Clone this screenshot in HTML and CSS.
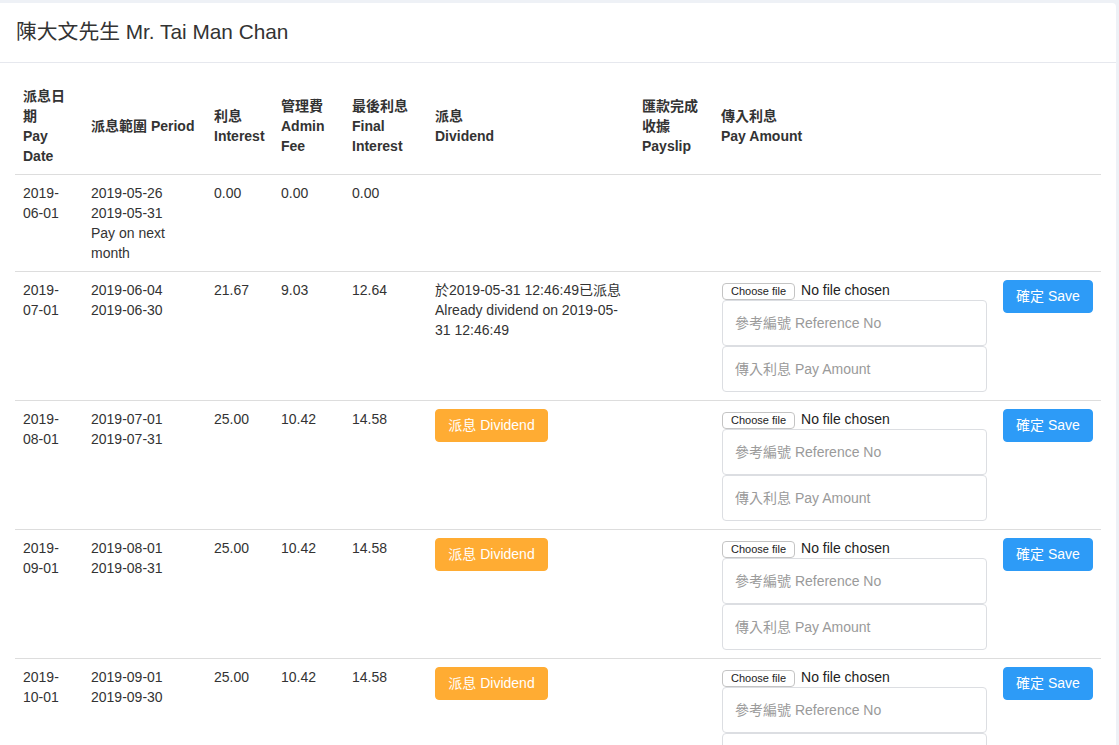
FILE: index.html
```html
<!DOCTYPE html>
<html lang="zh-Hant">
<head>
<meta charset="utf-8">
<title>派息</title>
<link rel="stylesheet" href="styles.css">
</head>
<body>
<div class="page">
  <div class="card">
    <div class="card-head">陳大文先生 Mr. Tai Man Chan</div>
    <div class="card-body">
      <table class="tbl">
        <colgroup>
          <col class="c1"><col class="c2"><col class="c3"><col class="c4"><col class="c5"><col class="c6"><col class="c7"><col class="c8"><col class="c9">
        </colgroup>
        <thead>
          <tr>
            <th>派息日期<br>Pay Date</th>
            <th>派息範圍 Period</th>
            <th>利息<br>Interest</th>
            <th>管理費<br>Admin Fee</th>
            <th>最後利息<br>Final Interest</th>
            <th>派息<br>Dividend</th>
            <th>匯款完成收據<br>Payslip</th>
            <th>傳入利息<br>Pay Amount</th>
            <th></th>
          </tr>
        </thead>
        <tbody>
          <tr>
            <td>2019-06-01</td>
            <td>2019-05-26<br>2019-05-31<br>Pay on next month</td>
            <td>0.00</td>
            <td>0.00</td>
            <td>0.00</td>
            <td></td>
            <td></td>
            <td></td>
            <td></td>
          </tr>
          <tr>
            <td>2019-07-01</td>
            <td>2019-06-04<br>2019-06-30</td>
            <td>21.67</td>
            <td>9.03</td>
            <td>12.64</td>
            <td>於2019-05-31 12:46:49已派息<br>Already dividend on 2019-05-31 12:46:49</td>
            <td></td>
            <td>
              <div class="upload">
                <label class="file"><input type="file" class="file-input"><span class="file-btn">Choose file</span><span class="file-name">No file chosen</span></label>
                <input type="text" class="field" placeholder="參考編號 Reference No">
                <input type="text" class="field" placeholder="傳入利息 Pay Amount">
              </div>
            </td>
            <td><button class="btn btn-save">確定 Save</button></td>
          </tr>
          <tr>
            <td>2019-08-01</td>
            <td>2019-07-01<br>2019-07-31</td>
            <td>25.00</td>
            <td>10.42</td>
            <td>14.58</td>
            <td><button class="btn btn-div">派息 Dividend</button></td>
            <td></td>
            <td>
              <div class="upload">
                <label class="file"><input type="file" class="file-input"><span class="file-btn">Choose file</span><span class="file-name">No file chosen</span></label>
                <input type="text" class="field" placeholder="參考編號 Reference No">
                <input type="text" class="field" placeholder="傳入利息 Pay Amount">
              </div>
            </td>
            <td><button class="btn btn-save">確定 Save</button></td>
          </tr>
          <tr>
            <td>2019-09-01</td>
            <td>2019-08-01<br>2019-08-31</td>
            <td>25.00</td>
            <td>10.42</td>
            <td>14.58</td>
            <td><button class="btn btn-div">派息 Dividend</button></td>
            <td></td>
            <td>
              <div class="upload">
                <label class="file"><input type="file" class="file-input"><span class="file-btn">Choose file</span><span class="file-name">No file chosen</span></label>
                <input type="text" class="field" placeholder="參考編號 Reference No">
                <input type="text" class="field" placeholder="傳入利息 Pay Amount">
              </div>
            </td>
            <td><button class="btn btn-save">確定 Save</button></td>
          </tr>
          <tr>
            <td>2019-10-01</td>
            <td>2019-09-01<br>2019-09-30</td>
            <td>25.00</td>
            <td>10.42</td>
            <td>14.58</td>
            <td><button class="btn btn-div">派息 Dividend</button></td>
            <td></td>
            <td>
              <div class="upload">
                <label class="file"><input type="file" class="file-input"><span class="file-btn">Choose file</span><span class="file-name">No file chosen</span></label>
                <input type="text" class="field" placeholder="參考編號 Reference No">
                <input type="text" class="field" placeholder="傳入利息 Pay Amount">
              </div>
            </td>
            <td><button class="btn btn-save">確定 Save</button></td>
          </tr>
        </tbody>
      </table>
    </div>
  </div>
</div>
</body>
</html>
```

FILE: styles.css
```css
* { box-sizing: border-box; }

html, body {
  margin: 0;
  padding: 0;
  background: #eef1f6;
}

body {
  font-family: "Liberation Sans", "Noto Sans CJK TC", sans-serif;
  font-size: 14px;
  line-height: 20px;
  color: #333;
}

.page {
  padding-top: 3px;
}

.card {
  width: 1116px;
  background: #fff;
  border-radius: 0 4px 0 0;
}

.card-head {
  height: 60px;
  display: flex;
  align-items: center;
  padding: 0 16px 2px 16px;
  font-size: 20.8px;
  color: #333;
  border-bottom: 1px solid #e6e8ee;
}

.card-body {
  padding: 15px 15px 0 15px;
}

.tbl {
  width: 1086px;
  border-collapse: collapse;
  table-layout: fixed;
}

.c1 { width: 68px; }
.c2 { width: 123px; }
.c3 { width: 67px; }
.c4 { width: 71px; }
.c5 { width: 83px; }
.c6 { width: 207px; }
.c7 { width: 79px; }
.c8 { width: 282px; }
.c9 { width: 106px; }

.tbl th {
  text-align: left;
  font-weight: bold;
  vertical-align: middle;
  padding: 8px;
  border-bottom: 1px solid #dddddd;
}

.tbl td {
  vertical-align: top;
  padding: 8px;
  border-bottom: 1px solid #dddddd;
}

.upload {
  display: flex;
  flex-direction: column;
}

.file {
  display: flex;
  align-items: baseline;
  height: 20px;
  padding-left: 1px;
  cursor: pointer;
}

.file-input {
  display: none;
}

.file-btn {
  display: inline-block;
  height: 17px;
  margin-right: 6px;
  padding: 0 8px;
  font-size: 11px;
  line-height: 15px;
  color: #222;
  background: #fff;
  border: 1px solid #c4c4c4;
  border-radius: 4px;
}

.file-name {
  font-size: 14px;
  line-height: 20px;
  color: #222;
}

.field {
  display: block;
  width: 265px;
  height: 46px;
  margin: 0 0 0 1px;
  padding: 0 12px;
  font-family: "Liberation Sans", "Noto Sans CJK TC", sans-serif;
  font-size: 14px;
  color: #333;
  background: #fff;
  border: 1px solid #dcdee2;
  border-radius: 4px;
  outline: none;
}

.field::placeholder {
  color: #9a9a9a;
}

.btn {
  display: inline-block;
  height: 33px;
  padding: 0 8px;
  font-family: "Liberation Sans", "Noto Sans CJK TC", sans-serif;
  font-size: 14px;
  line-height: 31px;
  white-space: nowrap;
  color: #fff;
  border: 1px solid transparent;
  border-radius: 4px;
  cursor: pointer;
}

.btn-save {
  width: 90px;
  background: #2d9bf7;
  border-color: #2d9bf7;
}

.btn-div {
  width: 113px;
  background: #ffac33;
  border-color: #ffac33;
}
```
